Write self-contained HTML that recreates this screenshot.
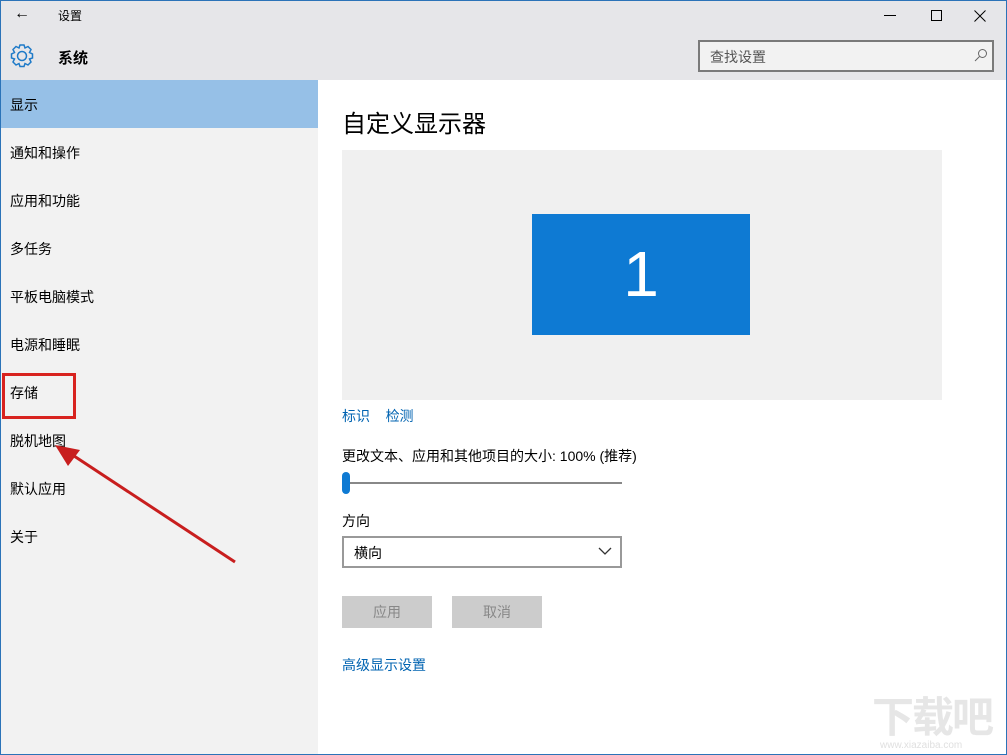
<!DOCTYPE html>
<html><head><meta charset="utf-8"><style>
*{margin:0;padding:0;box-sizing:border-box}
body{width:1007px;height:755px;overflow:hidden;background:#fff;font-family:"Liberation Sans","Noto Sans CJK SC",sans-serif;position:relative;color:#000}
.abs{position:absolute}
.frame{left:0;top:0;width:1007px;height:755px;border:1px solid #2b73b8}
.hdr{left:1px;top:1px;width:1005px;height:79px;background:#e6e6e9}
.side{left:1px;top:80px;width:317px;height:674px;background:#f2f2f2}
.item{position:absolute;left:10px;font-size:14px}
.sel{left:1px;top:80px;width:317px;height:48px;background:#96c0e7}
.btn{background:#ccc;color:#888;font-size:14px;text-align:center;line-height:32px;width:90px;height:32px}
a{color:#0063b1;text-decoration:none}
</style></head><body>
<div class="abs hdr"></div>
<div class="abs side"></div>
<div class="abs sel"></div>
<div class="abs" style="left:14px;top:5px;font-size:16px">←</div>
<div class="abs" style="left:58px;top:7px;font-size:12px">设置</div>
<svg class="abs" style="left:9px;top:43px" width="26" height="26" viewBox="0 0 26 26"><g fill="none" stroke="#1e7ac8" stroke-width="1.5"><circle cx="13" cy="13" r="4.5"/><path d="M11 2h4l1 3 3-1.5 3 3L20.5 9.5 23.5 11v4l-3 1 1.5 3-3 3-3-1.5-1 3h-4l-1-3-3 1.5-3-3L5.5 16l-3-1v-4l3-1.5L4 6.5l3-3L10 5z"/></g></svg>
<div class="abs" style="left:58px;top:47px;font-size:15px;font-weight:bold">系统</div>
<div class="abs" style="left:884px;top:15px;width:12px;border-top:1px solid #000"></div>
<div class="abs" style="left:931px;top:10px;width:11px;height:11px;border:1px solid #000"></div>
<svg class="abs" style="left:974px;top:10px" width="12" height="12"><path d="M0.5 0.5l11 11M11.5 0.5l-11 11" stroke="#000" stroke-width="1"/></svg>
<div class="abs" style="left:698px;top:40px;width:296px;height:32px;border:2px solid #7a7a7a;background:#f2f2f2"></div>
<div class="abs" style="left:710px;top:47px;font-size:14px;color:#555">查找设置</div>
<svg class="abs" style="left:974px;top:48px" width="14" height="14"><circle cx="8.5" cy="5.5" r="4" fill="none" stroke="#666"/><path d="M5.5 8.5L1 13" stroke="#666"/></svg>
<div class="item" style="top:95px">显示</div>
<div class="item" style="top:143px">通知和操作</div>
<div class="item" style="top:191px">应用和功能</div>
<div class="item" style="top:239px">多任务</div>
<div class="item" style="top:287px">平板电脑模式</div>
<div class="item" style="top:335px">电源和睡眠</div>
<div class="item" style="top:383px">存储</div>
<div class="item" style="top:431px">脱机地图</div>
<div class="item" style="top:479px">默认应用</div>
<div class="item" style="top:527px">关于</div>
<div class="abs" style="left:2px;top:373px;width:74px;height:46px;border:3px solid #d8231f"></div>
<svg class="abs" style="left:50px;top:440px" width="200" height="130"><line x1="185" y1="122" x2="18" y2="12" stroke="#c81e1e" stroke-width="3"/><polygon points="5,5 30,10 18,26" fill="#c81e1e"/></svg>
<div class="abs" style="left:342px;top:104px;font-size:24px">自定义显示器</div>
<div class="abs" style="left:342px;top:150px;width:600px;height:250px;background:#f0f0f0"></div>
<div class="abs" style="left:532px;top:214px;width:218px;height:121px;background:#0e7ad3;color:#fff;font-size:64px;text-align:center;line-height:121px;font-weight:300">1</div>
<div class="abs" style="left:342px;top:406px;font-size:14px"><a>标识</a>&nbsp;&nbsp;&nbsp;&nbsp;<a>检测</a></div>
<div class="abs" style="left:342px;top:446px;font-size:14px">更改文本、应用和其他项目的大小: 100% (推荐)</div>
<div class="abs" style="left:342px;top:482px;width:280px;height:2px;background:#888"></div>
<div class="abs" style="left:342px;top:472px;width:8px;height:22px;background:#0e7ad3;border-radius:4px"></div>
<div class="abs" style="left:342px;top:511px;font-size:14px">方向</div>
<div class="abs" style="left:342px;top:536px;width:280px;height:32px;border:2px solid #999"></div>
<div class="abs" style="left:354px;top:543px;font-size:14px">横向</div>
<svg class="abs" style="left:598px;top:546px" width="14" height="10"><path d="M1 2l6 6 6-6" fill="none" stroke="#333" stroke-width="1.3"/></svg>
<div class="abs btn" style="left:342px;top:596px">应用</div>
<div class="abs btn" style="left:452px;top:596px">取消</div>
<div class="abs" style="left:342px;top:655px;font-size:14px"><a>高级显示设置</a></div>
<div class="abs" style="left:872px;top:693px;font-size:42px;line-height:50px;color:#e6e6e6;font-weight:bold;white-space:nowrap;letter-spacing:-2px">下载吧</div>
<div class="abs" style="left:880px;top:740px;font-size:10px;color:#e0e0e0;white-space:nowrap">www.xiazaiba.com</div>
<div class="abs frame"></div>
</body></html>
